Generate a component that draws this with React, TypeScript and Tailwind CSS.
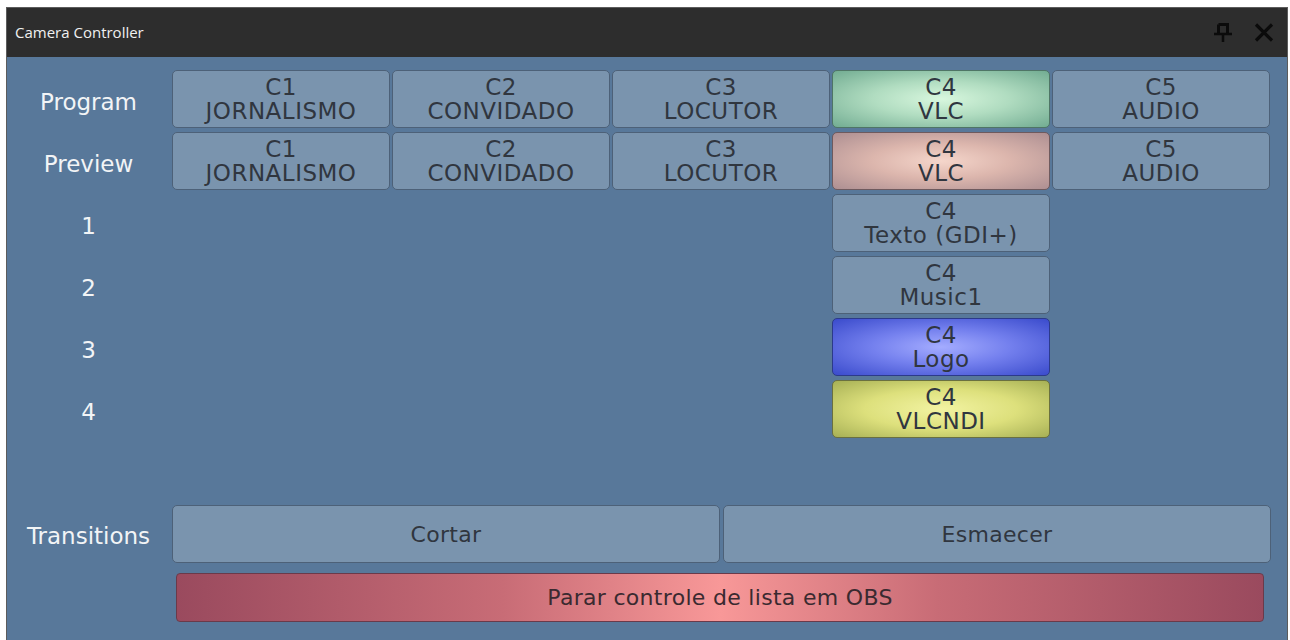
import React from "react";

const font = { fontFamily: '"DejaVu Sans", Verdana, sans-serif' };

type Btn = { top: string; bottom: string; kind?: "green" | "pink" | "blue" | "yellow" };

const cams: Btn[] = [
  { top: "C1", bottom: "JORNALISMO" },
  { top: "C2", bottom: "CONVIDADO" },
  { top: "C3", bottom: "LOCUTOR" },
  { top: "C4", bottom: "VLC" },
  { top: "C5", bottom: "AUDIO" },
];

function CamButton({ b }: { b: Btn }) {
  let cls = "bg-[#7a94ae] border-[#4d6178]";
  if (b.kind === "green")
    cls = "bg-[radial-gradient(ellipse_at_center,#d8f7de_0%,#b0dcc0_45%,#72ac92_100%)] border-[#4f7566]";
  if (b.kind === "pink")
    cls = "bg-[radial-gradient(ellipse_at_center,#f5d6cb_0%,#dcb6ad_45%,#ad8f92_100%)] border-[#6e5a5e]";
  if (b.kind === "blue")
    cls = "bg-[radial-gradient(ellipse_at_center,#a4acff_0%,#7480ee_45%,#3a4bcc_100%)] border-[#2c3a8a]";
  if (b.kind === "yellow")
    cls = "bg-[radial-gradient(ellipse_at_center,#f2f3a2_0%,#dde07c_50%,#a7b055_100%)] border-[#6a7040]";
  return (
    <div
      className={`w-[218px] h-[58px] shrink-0 rounded-[5px] border flex flex-col items-center justify-center text-[23px] leading-[24px] tracking-[0.5px] text-[#30363f] ${cls}`}
    >
      <span>{b.top}</span>
      <span>{b.bottom}</span>
    </div>
  );
}

function Empty() {
  return <div className="w-[218px] h-[58px] shrink-0" />;
}

function Label({ text }: { text: string }) {
  return (
    <div className="w-[163px] shrink-0 flex items-center justify-center text-[23px] text-[#f2f4f6] pt-[6px]">
      {text}
    </div>
  );
}

export default function App() {
  const program = cams.map((c, i) => (i === 3 ? { ...c, kind: "green" as const } : c));
  const preview = cams.map((c, i) => (i === 3 ? { ...c, kind: "pink" as const } : c));
  const extras: Btn[] = [
    { top: "C4", bottom: "Texto (GDI+)" },
    { top: "C4", bottom: "Music1" },
    { top: "C4", bottom: "Logo", kind: "blue" },
    { top: "C4", bottom: "VLCNDI", kind: "yellow" },
  ];
  return (
    <div className="w-[1290px] h-[640px] bg-white overflow-hidden pl-[6px] pt-[7px]" style={font}>
      <div className="w-[1282px] h-[640px] border border-[#5c5c5c] bg-[#58789a] flex flex-col">
        <div className="h-[49px] bg-[#2d2d2d] flex items-center pl-[8px] pr-[13px] shrink-0">
          <span className="text-[15px] text-[#f0f0f0]" style={{ fontFamily: '"Open Sans", "DejaVu Sans", sans-serif' }}>
            Camera Controller
          </span>
          <div className="ml-auto flex items-center gap-[22px]">
            <svg width="18" height="19" viewBox="0 0 18 19" className="mt-[-1px]">
              <path d="M4.5 1.5 H13.5 V11 M4.5 1.5 V11" stroke="#0b0b0b" strokeWidth="3" fill="none" />
              <path d="M0 11 H18" stroke="#0b0b0b" strokeWidth="2.5" />
              <path d="M9 11 V19" stroke="#0b0b0b" strokeWidth="2.5" />
            </svg>
            <svg width="20" height="19" viewBox="0 0 20 19">
              <path d="M2 1.5 L18 17.5 M18 1.5 L2 17.5" stroke="#0b0b0b" strokeWidth="3.2" />
            </svg>
          </div>
        </div>
        <div className="flex flex-col pt-[13px]">
          <div className="flex flex-col gap-[4px]">
            <div className="flex gap-[2px]">
              <Label text="Program" />
              {program.map((b, i) => (
                <CamButton key={i} b={b} />
              ))}
            </div>
            <div className="flex gap-[2px]">
              <Label text="Preview" />
              {preview.map((b, i) => (
                <CamButton key={i} b={b} />
              ))}
            </div>
            {extras.map((b, i) => (
              <div key={i} className="flex gap-[2px]">
                <Label text={String(i + 1)} />
                <Empty />
                <Empty />
                <Empty />
                <CamButton b={b} />
                <Empty />
              </div>
            ))}
          </div>
          <div className="flex gap-[2px] mt-[67px]">
            <div className="w-[163px] shrink-0 flex items-center justify-center text-[23px] text-[#f2f4f6] pt-[4px]">
              Transitions
            </div>
            <div className="w-[1099px] flex gap-[3px]">
              <div className="flex-1 h-[58px] rounded-[5px] border border-[#4d6178] bg-[#7a94ae] flex items-center justify-center text-[22px] tracking-[0.3px] text-[#30363f]">
                Cortar
              </div>
              <div className="flex-1 h-[58px] rounded-[5px] border border-[#4d6178] bg-[#7a94ae] flex items-center justify-center text-[22px] tracking-[0.3px] text-[#30363f]">
                Esmaecer
              </div>
            </div>
          </div>
          <div className="pl-[169px] mt-[10px]">
            <div className="w-[1088px] h-[49px] rounded-[4px] border border-[#6a3a4a] bg-[linear-gradient(to_right,#9a4a5e_0%,#c86c76_30%,#f89898_50%,#c86c76_70%,#9a4a5e_100%)] flex items-center justify-center text-[22px] tracking-[0.3px] text-[#3a2a30]">
              Parar controle de lista em OBS
            </div>
          </div>
        </div>
      </div>
    </div>
  );
}
